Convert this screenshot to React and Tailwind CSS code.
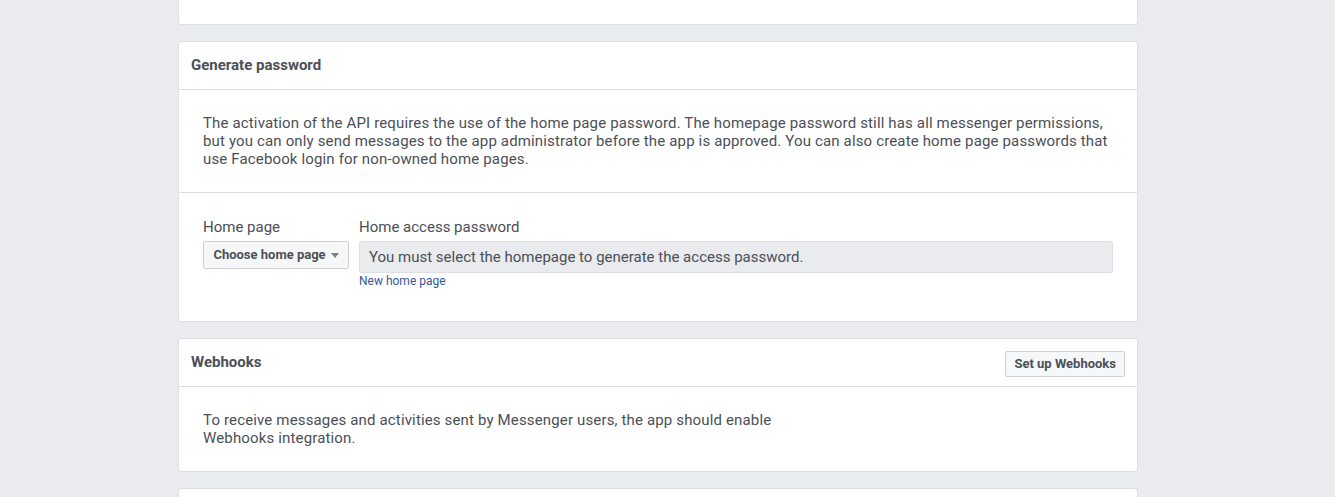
export default function App() {
  const font = { fontFamily: "Roboto, 'Liberation Sans', Arial, sans-serif" };
  return (
    <div className="min-h-[497px] bg-[#e9ebee] text-[#4b4f56] overflow-hidden" style={font}>
      <div className="ml-[178px] w-[960px] flex flex-col gap-4">
        {/* Partial top card */}
        <div className="h-[25px] bg-white border-x border-b border-[#dddfe2] rounded-b-[3px]" />

        {/* Generate password */}
        <div className="bg-white border border-[#dddfe2] rounded-[3px]">
          <div className="h-[48px] flex items-center px-3 border-b border-[#dddfe2]">
            <span className="text-[15px] font-bold leading-[18px] pb-[2px]">Generate password</span>
          </div>
          <div className="px-6 py-6 border-b border-[#dddfe2]">
            <p className="text-[15px] leading-[18px] tracking-[0.15px]">
              The activation of the API requires the use of the home page password. The homepage password still has all messenger permissions, but you can only send messages to the app administrator before the app is approved. You can also create home page passwords that use Facebook login for non-owned home pages.
            </p>
          </div>
          <div className="pl-6 pr-6 pt-[25px] pb-[32px] flex gap-[10px]">
            <div className="flex flex-col w-[146px]">
              <span className="text-[15px] leading-[18px] mb-[5px]">Home page</span>
              <button className="h-[28px] w-[146px] flex items-center justify-center gap-[5px] bg-[#f6f7f9] border border-[#ced0d4] rounded-[2px] text-[13px] font-bold text-[#4b4f56]">
                Choose home page
                <span className="w-0 h-0 border-x-[4px] border-x-transparent border-t-[5px] border-t-[#7f7f7f]" />
              </button>
            </div>
            <div className="flex flex-col flex-1">
              <span className="text-[15px] leading-[18px] mb-[5px]">Home access password</span>
              <div className="h-[32px] flex items-center px-[9px] bg-[#e9ebee] border border-[#dddfe2] rounded-[2px] text-[15px]">
                You must select the homepage to generate the access password.
              </div>
              <span className="text-[12px] leading-[16px] text-[#365899] mt-0">New home page</span>
            </div>
          </div>
        </div>

        {/* Webhooks */}
        <div className="bg-white border border-[#dddfe2] rounded-[3px]">
          <div className="h-[48px] flex items-center justify-between px-3 border-b border-[#dddfe2]">
            <span className="text-[15px] font-bold leading-[18px] pb-[2px]">Webhooks</span>
            <button className="h-[26px] mt-[2px] px-[8px] bg-[#f6f7f9] border border-[#ced0d4] rounded-[2px] text-[13px] font-bold text-[#4b4f56]">
              Set up Webhooks
            </button>
          </div>
          <div className="px-6 py-6">
            <p className="text-[15px] leading-[18px] tracking-[0.15px] max-w-[600px]">
              To receive messages and activities sent by Messenger users, the app should enable Webhooks integration.
            </p>
          </div>
        </div>

        {/* Next card partial */}
        <div className="h-[40px] bg-white border-x border-t border-[#dddfe2] rounded-t-[3px]" />
      </div>
    </div>
  );
}
